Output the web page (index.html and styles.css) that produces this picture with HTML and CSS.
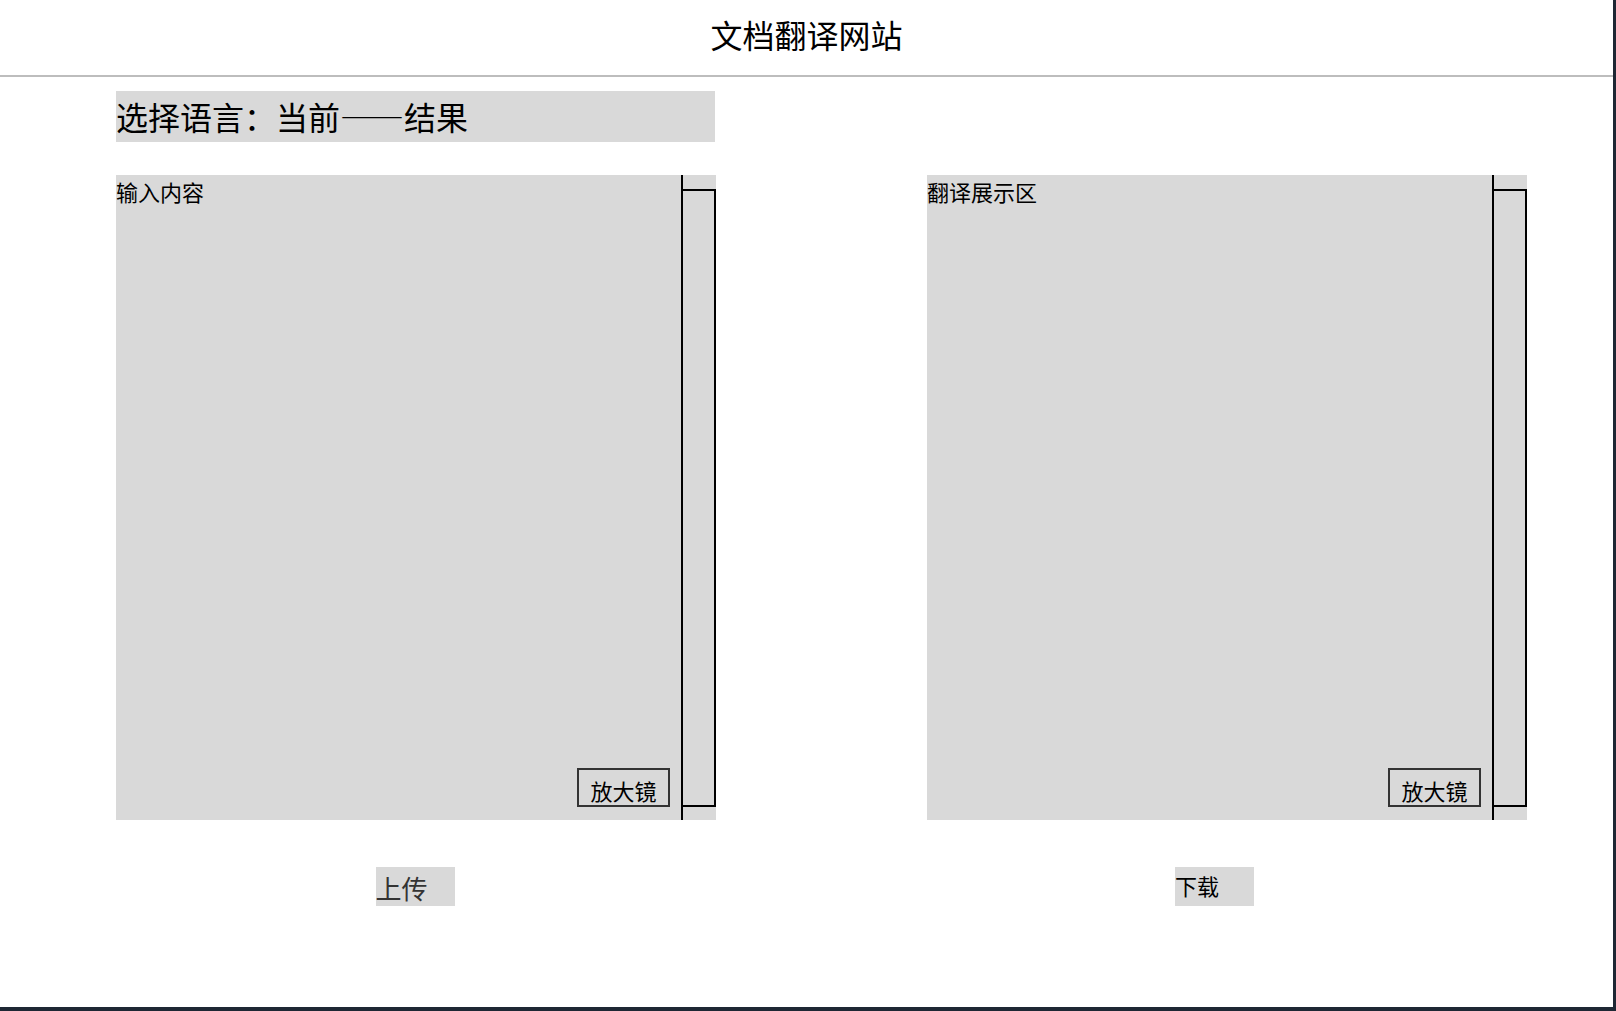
FILE: index.html
```html
<!DOCTYPE html>
<html lang="zh-CN">
<head>
    <meta charset="UTF-8">
    <meta name="viewport" content="width=device-width, initial-scale=1.0">
    <title>文档翻译网站</title>
    <link rel="stylesheet" href="styles.css">
</head>
<body>
    <div class="page">
        <header class="top-bar">
            <h1>文档翻译网站</h1>
        </header>

        <div class="lang-bar">选择语言：当前——结果</div>

        <div class="panels">
            <div class="panel-col">
                <div class="panel">
                    <div class="panel-body">
                        <span class="panel-label">输入内容</span>
                        <button type="button" class="zoom-btn">放大镜</button>
                    </div>
                    <div class="scroll-track"><div class="scroll-thumb"></div></div>
                </div>
                <div class="action-row">
                    <button type="button" class="action-btn upload">上传</button>
                </div>
            </div>

            <div class="panel-col">
                <div class="panel">
                    <div class="panel-body">
                        <span class="panel-label">翻译展示区</span>
                        <button type="button" class="zoom-btn">放大镜</button>
                    </div>
                    <div class="scroll-track"><div class="scroll-thumb"></div></div>
                </div>
                <div class="action-row shift">
                    <button type="button" class="action-btn download">下载</button>
                </div>
            </div>
        </div>
    </div>
</body>
</html>
```

FILE: styles.css
```css
html {
    background: #1e2734;
}

body {
    margin: 0;
    font-family: "Noto Sans CJK SC", "Noto Sans", sans-serif;
    color: #000;
}

.page {
    width: 1613px;
    height: 1007px;
    background: #fff;
}

.top-bar {
    height: 75px;
    border-bottom: 2px solid #bdbdbd;
    display: flex;
    align-items: center;
    justify-content: center;
}

.top-bar h1 {
    margin: 0 0 8px;
    font-size: 32px;
    font-weight: normal;
    line-height: 1;
}

.lang-bar {
    margin: 14px 0 0 116px;
    width: 599px;
    height: 51px;
    line-height: 51px;
    background: #d9d9d9;
    font-size: 32px;
}

.panels {
    display: flex;
    gap: 211px;
    margin: 33px 0 0 116px;
}

.panel-col {
    width: 600px;
}

.panel {
    height: 645px;
    background: #d9d9d9;
    display: flex;
}

.panel-body {
    flex: 1;
    display: flex;
    flex-direction: column;
    align-items: flex-start;
}

.panel-label {
    font-size: 22px;
    line-height: 28px;
    margin-top: 2px;
}

.zoom-btn {
    margin: auto 11px 13px 0;
    align-self: flex-end;
    width: 93px;
    height: 39px;
    padding: 4px 0 0;
    background: transparent;
    border: 2px solid #333;
    font-family: inherit;
    font-size: 22px;
    line-height: 1;
    color: #000;
}

.scroll-track {
    width: 35px;
    border-left: 2px solid #000;
    padding: 14px 0 13px;
    box-sizing: border-box;
}

.scroll-thumb {
    height: 100%;
    border: 2px solid #000;
    border-left: none;
    box-sizing: border-box;
}

.action-row {
    display: flex;
    justify-content: center;
    margin-top: 47px;
    padding-right: 2px;
}

.action-row.shift {
    padding-right: 25px;
}

.action-btn {
    width: 79px;
    height: 39px;
    padding: 0;
    border: none;
    background: #d9d9d9;
    font-family: inherit;
    text-align: left;
    color: #000;
}

.action-btn.upload {
    font-size: 26px;
    color: #333;
    padding-top: 1px;
}

.action-btn.download {
    font-size: 22px;
    padding-bottom: 4px;
}
```
